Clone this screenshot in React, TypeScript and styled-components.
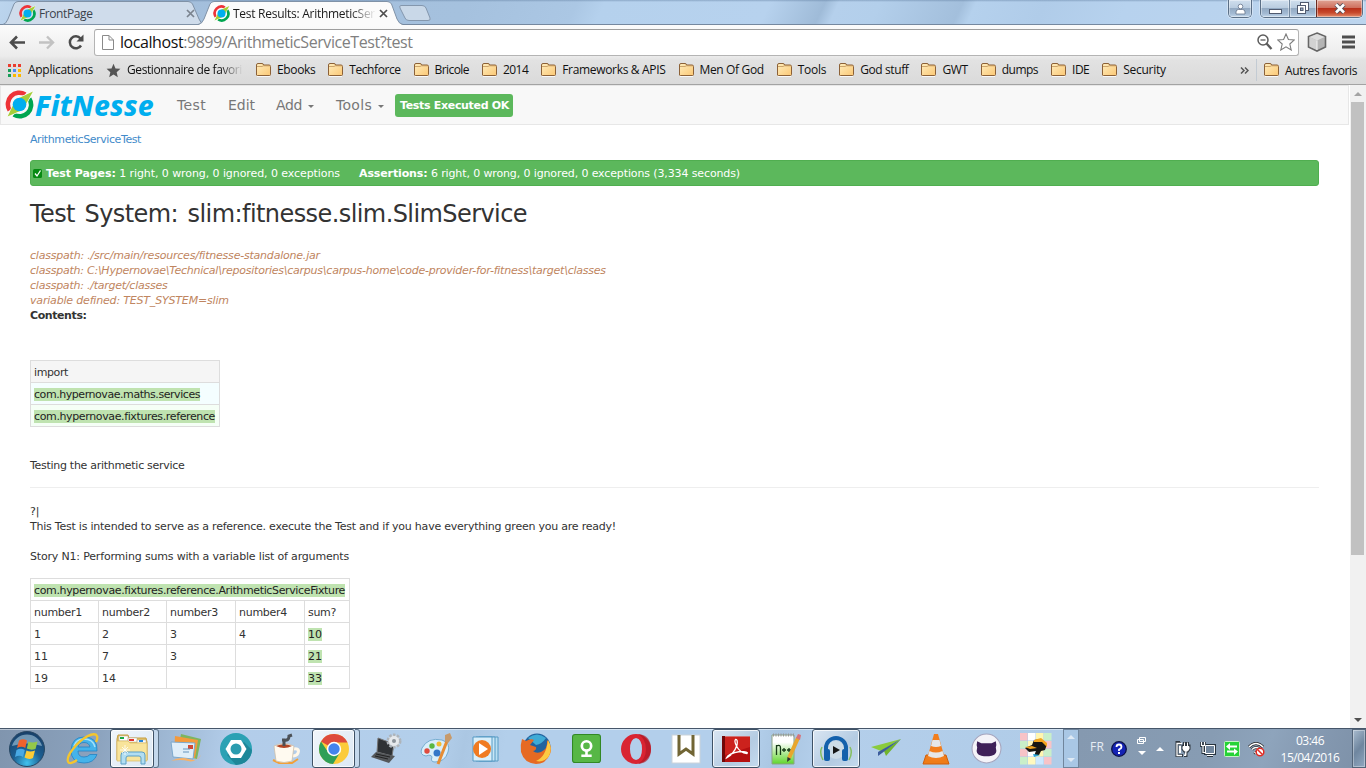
import React, { useLayoutEffect, useRef, useState } from 'react';
import styled, { createGlobalStyle, css } from 'styled-components';

const UI = `"Open Sans", "Noto Sans", sans-serif`;
const PAGE = `"DejaVu Sans", sans-serif`;

const Global = createGlobalStyle`
  * { box-sizing: border-box; }
  body { margin: 0; overflow: hidden; background: #fff; }
  svg { display: block; flex: none; }
`;

/* ---------- text that tracks itself to a given width ---------- */

const FitText = styled.span`
  display: inline-block;
  white-space: nowrap;
  flex: none;
`;

function Fit({ w, children }: { w: number; children: React.ReactNode }) {
  const ref = useRef<HTMLSpanElement>(null);
  const [spacing, setSpacing] = useState(0);
  useLayoutEffect(() => {
    const el = ref.current;
    if (!el) return;
    const count = (el.textContent || '').length;
    setSpacing((w - el.getBoundingClientRect().width) / count);
  }, [w]);
  return (
    <FitText ref={ref} style={{ letterSpacing: `${spacing}px` }}>
      {children}
    </FitText>
  );
}

/* ---------- window frame ---------- */

const Window = styled.div`
  width: 1366px;
  height: 768px;
  display: flex;
  flex-direction: column;
  overflow: hidden;
  font-family: ${UI};
`;

const TabStrip = styled.div`
  height: 25px;
  flex: none;
  display: flex;
  align-items: flex-start;
  padding: 0 3px 0 3px;
  border-bottom: 1px solid #75889f;
  background:
    linear-gradient(rgba(90, 120, 155, 0.45), rgba(90, 120, 155, 0) 2px),
    linear-gradient(115deg, #bcd5ee 0, #a3bedb 8%, #a5c1de 34%, #abc7e4 42%, #b5d1ed 44%, #b7d2ee 56%, #9fbbd8 60%, #b5d0ec 61%, #b3cfeb 64%, #a3bfdc 70%, #b5d1ed 71%, #b0cce9 76%, #b7d2ee 82%, #bdd5ee 100%);
`;

const Tab = styled.div<{ $w: number; $active?: boolean }>`
  position: relative;
  z-index: ${(p) => (p.$active ? 2 : 1)};
  width: ${(p) => p.$w}px;
  height: 25px;
  margin-right: -7px;
  padding: 1px 0 0 ${(p) => (p.$active ? 15 : 16)}px;
  display: flex;
  align-items: center;
  gap: 3px;
  font-size: 12px;
  color: ${(p) => (p.$active ? '#1a1a1a' : '#3b434c')};
  > svg { position: relative; }
`;

const TabShape = styled.span`
  position: absolute;
  inset: 0;
`;

const TabTitle = styled.span<{ $w: number; $fade?: boolean }>`
  position: relative;
  width: ${(p) => p.$w}px;
  overflow: hidden;
  white-space: nowrap;
  ${(p) => p.$fade && css`mask-image: linear-gradient(90deg, #000 82%, transparent 100%);`}
`;

const NewTab = styled.div`
  margin: 5px 0 0 3px;
`;

const WindowControls = styled.div`
  margin-left: auto;
  display: flex;
  gap: 8px;
`;

const ControlGroup = styled.div`
  display: flex;
  height: 18px;
  border: 1px solid #5b6f86;
  border-top: 0;
  border-radius: 0 0 5px 5px;
  overflow: hidden;
  box-shadow: 0 0 0 1px rgba(255, 255, 255, 0.35);
`;

const Control = styled.div<{ $w: number; $close?: boolean }>`
  width: ${(p) => p.$w}px;
  display: flex;
  align-items: center;
  justify-content: center;
  border-left: 1px solid ${(p) => (p.$close ? '#6b2a20' : '#71869d')};
  box-shadow: inset 0 0 0 1px rgba(255, 255, 255, 0.4);
  background: ${(p) =>
    p.$close
      ? 'linear-gradient(#e0a394, #cf705e 45%, #b9301a 50%, #c84a2d 75%, #e48d6c)'
      : 'linear-gradient(#d0dfee, #bacde0 45%, #93aac3 50%, #a3bad3 80%, #c2d6ea)'};
  &:first-child { border-left: 0; }
`;

/* ---------- browser toolbar ---------- */

const Toolbar = styled.div`
  height: 31px;
  flex: none;
  display: flex;
  align-items: center;
  padding: 3px 10px 0 9px;
  background: linear-gradient(#fbfbfb, #ececec);
`;

const NavButton = styled.div<{ $gap: number }>`
  margin-right: ${(p) => p.$gap}px;
`;

const Address = styled.div`
  width: 1205px;
  height: 27px;
  display: flex;
  align-items: center;
  padding: 0 3px 0 7px;
  border: 1px solid #b4b4b4;
  border-top-color: #9e9e9e;
  border-radius: 3px;
  background: #fff;
  font-size: 16px;
  color: #808080;
  b { font-weight: 400; color: #111; }
`;

const AddressText = styled.div`
  flex: 1;
  padding: 0 0 1px 6px;
  line-height: 22px;
`;

const BookmarksBar = styled.div`
  height: 29px;
  flex: none;
  display: flex;
  align-items: center;
  padding-left: 8px;
  font-size: 12px;
  color: #111;
  background: linear-gradient(#ececec, #e2e2e2 15%, #dadada);
  border-bottom: 1px solid #a3a3a3;
`;

const Bookmark = styled.div<{ $gap?: number; $after?: number }>`
  display: flex;
  align-items: center;
  gap: ${(p) => p.$gap ?? 6}px;
  margin-right: ${(p) => p.$after ?? 13}px;
  line-height: 18px;
`;

const FadingLabel = styled.span`
  width: 116px;
  overflow: hidden;
  white-space: nowrap;
  mask-image: linear-gradient(90deg, #000 80%, transparent 100%);
`;

const OtherBookmarks = styled.div`
  margin-left: auto;
  padding: 0 9px 0 7px;
  height: 22px;
  display: flex;
  align-items: center;
  gap: 6px;
  border-left: 1px solid #c3cbd3;
`;

const Overflow = styled.div`
  margin-left: 61px;
`;

/* ---------- page ---------- */

const Viewport = styled.div`
  height: 643px;
  flex: none;
  display: flex;
  background: #fff;
`;

const Page = styled.main`
  width: 1349px;
  font: 11px/15px ${PAGE};
  color: #333;
`;

const Navbar = styled.nav`
  height: 40px;
  display: flex;
  align-items: center;
  padding-left: 4px;
  border: 1px solid #e7e7e7;
  background: #f8f8f8;
  font-size: 14px;
  color: #777;
`;

const Brand = styled.div`
  display: flex;
  align-items: center;
  gap: 1px;
  width: 172px;
  font: italic 800 28px/30px "Noto Sans", "Open Sans", sans-serif;
  color: #00aeef;
  > svg { margin-top: -2px; }
`;

const NavItem = styled.div<{ $after: number }>`
  display: flex;
  align-items: center;
  gap: 6px;
  margin-right: ${(p) => p.$after}px;
`;

const Caret = styled.span`
  margin-top: 3px;
  border: 3px solid transparent;
  border-top-color: #777;
  border-bottom: 0;
`;

const Badge = styled.div`
  height: 23px;
  padding: 0 4px 0 5px;
  line-height: 24px;
  border-radius: 3px;
  background: #5cb85c;
  color: #fff;
  font-size: 11px;
  font-weight: 700;
`;

const Content = styled.div`
  padding: 7px 30px 0;
`;

const Crumb = styled.a`
  display: block;
  color: #428bca;
`;

const Summary = styled.div`
  display: flex;
  align-items: center;
  height: 26px;
  margin-top: 13px;
  padding-left: 2px;
  border-radius: 3px;
  background: #5cb85c;
  border: 1px solid #50ae50;
  color: #fff;
`;

const Counts = styled.span<{ $left: number }>`
  margin-left: ${(p) => p.$left}px;
`;

const Heading = styled.h2`
  margin: 14px 0 0;
  font-size: 24px;
  line-height: 28px;
  font-weight: 400;
  word-spacing: 2.5px;
`;

const Meta = styled.div`
  margin-top: 20px;
  > div { height: 15px; }
`;

const MetaLine = styled.div`
  font-style: italic;
  color: #c08560;
`;

const Line = styled.div`
  height: 15px;
`;

const Spaced = styled.div<{ $top: number }>`
  margin-top: ${(p) => p.$top}px;
`;

const Rule = styled.hr`
  height: 1px;
  margin: 14px 0 16px;
  border: 0;
  background: #eee;
`;

const Grid = styled.table<{ $w: number; $top: number }>`
  width: ${(p) => p.$w}px;
  margin-top: ${(p) => p.$top}px;
  table-layout: fixed;
  border-collapse: collapse;
`;

const Cell = styled.td<{ $bg?: string }>`
  height: 22px;
  padding: 2px 0 0 3px;
  border: 1px solid #ddd;
  background: ${(p) => p.$bg ?? '#fff'};
  line-height: 13px;
  white-space: nowrap;
  vertical-align: middle;
`;

const Pass = styled.span`
  display: inline-block;
  height: 13px;
  background: #bfe3b0;
  color: #222;
`;

const Scrollbar = styled.div`
  width: 17px;
  display: flex;
  flex-direction: column;
  align-items: center;
  background: #f1f1f1;
  border-left: 1px solid #fff;
`;

const Arrow = styled.div<{ $down?: boolean }>`
  height: 17px;
  display: flex;
  align-items: center;
  &::before {
    content: '';
    border: 4px solid transparent;
    ${(p) => (p.$down ? 'border-top-color: #505050; border-bottom: 0;' : 'border-bottom-color: #a3a3a3; border-top: 0;')}
  }
`;

const Thumb = styled.div`
  width: 13px;
  height: 453px;
  margin-bottom: auto;
  margin-right: 1px;
  background: #c1c1c1;
`;

/* ---------- taskbar ---------- */

const Taskbar = styled.div`
  height: 40px;
  flex: none;
  display: flex;
  border-top: 1px solid #46566a;
  box-shadow: inset 0 1px 0 rgba(255, 255, 255, 0.45);
  background: linear-gradient(100deg, #8095ae 0, #8ba2bd 7%, #a5bfdb 14%, #b3cdea 17%, #b3cfeb 32%, #abc7e3 34%, #b3cfeb 37%, #b3cfeb 55%, #a9c5e1 57%, #b4cfeb 60%, #b0cce8 77%);
`;

const StartSlot = styled.div`
  width: 58px;
  padding-left: 8px;
  display: flex;
  align-items: center;
`;

const Slot = styled.div<{ $w?: number }>`
  width: ${(p) => p.$w ?? 50}px;
  display: flex;
  align-items: center;
  justify-content: center;
`;

const RunningButton = styled.div<{ $w: number; $active?: boolean }>`
  width: ${(p) => p.$w}px;
  height: 39px;
  display: flex;
  align-items: center;
  justify-content: center;
  border: 1px solid #3f5266;
  border-radius: 3px;
  box-shadow: inset 0 0 0 1px rgba(255, 255, 255, 0.75);
  background: ${(p) => (p.$active ? 'linear-gradient(135deg, #f0f5fa, #dbe8f4)' : 'linear-gradient(135deg, #dae6f2, #b4cbe2 60%, #c4daee)')};
`;

const StackEdge = styled.div`
  width: 5px;
  height: 39px;
  border: 1px solid #5d7388;
  border-left: 0;
  border-radius: 0 3px 3px 0;
  background: #c4d8ec;
`;

const BandToggle = styled.div`
  width: 16px;
  margin-left: 2px;
  display: flex;
  flex-direction: column;
  justify-content: space-between;
  align-items: center;
  padding: 5px 0;
  border: 1px solid #70859c;
  background: #a9c7e5;
`;

const Triangle = styled.span<{ $up?: boolean; $c?: string }>`
  border: 4px solid transparent;
  ${(p) => (p.$up ? `border-bottom-color: ${p.$c ?? '#dfeaf5'}; border-top: 0;` : `border-top-color: ${p.$c ?? '#dfeaf5'}; border-bottom: 0;`)}
`;

const Tray = styled.div`
  flex: 1;
  display: flex;
  align-items: center;
  padding-left: 11px;
  background: linear-gradient(110deg, #8599b0, #879cb3 45%, #8ea4bc 65%, #8599b1 80%, #7c90a7);
  color: #fff;
  font-size: 12px;
`;

const TrayItem = styled.div<{ $after: number }>`
  display: flex;
  margin-right: ${(p) => p.$after}px;
`;

const Language = styled.div`
  margin: -4px 7px 0 0;
  color: #e6edf4;
`;

const LanguageTools = styled.div`
  width: 9px;
  height: 18px;
  margin: -6px 10px 0 0;
  display: flex;
  flex-direction: column;
  align-items: center;
  justify-content: space-between;
`;

const Clock = styled.div`
  width: 60px;
  display: flex;
  flex-direction: column;
  align-items: center;
  line-height: 17px;
`;

const ShowDesktop = styled.div`
  width: 14px;
  height: 39px;
  margin-left: auto;
  border: 1px solid #536579;
  box-shadow: inset 0 0 0 1px rgba(255, 255, 255, 0.35);
  background: linear-gradient(130deg, #a9bccf, #6f869f 50%, #91a8c0);
`;

/* ---------- drawings ---------- */

const RingLogo = ({ size }: { size: number }) => (
  <svg width={size} height={size} viewBox="0 0 28 28">
    <path d="M4.500 19.500A11 11 0 0 1 19.500 4.200" fill="none" stroke="#ee3338" strokeWidth="4.400" />
    <path d="M23.500 8.500A11 11 0 0 1 8.500 23.800" fill="none" stroke="#00a650" strokeWidth="4.400" />
    <path d="M27.500 1L20.500 15L14 21.500L2 26L7.500 13.500L14 6.500Z" fill="#fff" />
    <path d="M27 1.500L19.500 15L14 20.500L2.500 25.500L8.500 13L14 7.500Z" fill="#a6ce39" />
    <circle cx="14" cy="14" r="6.600" fill="#00aeef" />
  </svg>
);

const CloseX = ({ color }: { color: string }) => (
  <svg width="9" height="9" viewBox="0 0 9 9">
    <path d="M1 1L8 8M8 1L1 8" stroke={color} strokeWidth="1.7" />
  </svg>
);

const Folder = () => (
  <svg width="15" height="14" viewBox="0 0 15 14">
    <defs>
      <linearGradient id="folderFill" x1="0" y1="0" x2="1" y2="1">
        <stop offset="0" stopColor="#ffedbd" />
        <stop offset="1" stopColor="#fbc875" />
      </linearGradient>
    </defs>
    <path d="M.5 12V2Q.5 .5 2 .5H6Q7.500 .5 7.500 2H13Q14.500 2 14.500 3.500V11.500Q14.500 12.500 13.500 12.500H1.500Q.5 12.500 .5 12Z" fill="url(#folderFill)" stroke="#8c6137" />
    <path d="M1 3.500H6L7.500 2.800H14" stroke="#b78a50" strokeWidth=".7" fill="none" />
    <path d="M1 13.500H14" stroke="#fff" strokeWidth=".8" />
  </svg>
);

const AppsGrid = () => (
  <svg width="13" height="13" viewBox="0 0 13 13">
    {['#ea3d2f', '#ea3d2f', '#ea3d2f', '#189d58', '#4b8bf4', '#fcb900', '#189d58', '#fcb900', '#fcb900'].map((c, i) => (
      <rect key={i} x={(i % 3) * 5} y={Math.floor(i / 3) * 5} width="3" height="3" fill={c} />
    ))}
  </svg>
);

const StarPath = 'M9 1L11.400 6.500L17.300 7L12.800 11L14.200 17L9 13.800L3.800 17L5.200 11L.7 7L6.600 6.500Z';

const StartOrb = () => (
  <svg width="38" height="38" viewBox="0 0 38 38">
    <defs>
      <radialGradient id="orb" cx=".5" cy=".9" r=".9">
        <stop offset="0" stopColor="#40c2ee" />
        <stop offset=".45" stopColor="#1c5f92" />
        <stop offset="1" stopColor="#183f68" />
      </radialGradient>
    </defs>
    <circle cx="19" cy="19" r="17.500" fill="url(#orb)" stroke="#274763" />
    <path d="M4 16A15.500 15.500 0 0 1 34 16Q19 11 4 16Z" fill="#a9c9de" opacity=".6" />
    <path d="M11 10.500Q15 8 19 10.500L17.300 18Q13.500 15.500 9 18Z" fill="#f0622c" />
    <path d="M20.500 11.500Q24 13.500 29.500 11.500L27.500 19Q23 20.500 18.800 18.500Z" fill="#94c849" />
    <path d="M8.500 20Q13 17.500 16.800 20L15 27Q11.500 24.500 7 27Z" fill="#49a9e4" />
    <path d="M18.500 20.500Q22 22.500 27 20.500L25 28Q21 30 16.500 27.500Z" fill="#fccb35" />
  </svg>
);

const Explorer = () => (
  <svg width="34" height="34" viewBox="0 0 34 34">
    <path d="M2 7L3 3H13L14 6H31L32 10V28H2Z" fill="#e5c66a" stroke="#c59c40" />
    <path d="M4 4H13V9H4ZM13 6H22V10H13ZM22 8H31V11H22Z" fill="#fff" stroke="#b0a88c" strokeWidth=".5" />
    <path d="M5 5H9V7H5Z" fill="#18a848" /><path d="M14 7H19V9H14Z" fill="#e3352c" /><path d="M24 8H28V10H24Z" fill="#2786d8" />
    <path d="M2 9H13L15 11H32V29H2Z" fill="#f8e49b" stroke="#d9b95e" strokeWidth=".7" />
    <path d="M6 32V23Q6 20 9 20H27Q30 20 30 23V32H26V26Q26 24 24 24H13Q11 24 11 26V32Z" fill="#b2def2" stroke="#5b9fc6" />
    <path d="M10 13V23M5 18H15M7 15L13 21M13 15L7 21" stroke="#fff" strokeWidth=".8" />
  </svg>
);

const IE = () => (
  <svg width="34" height="34" viewBox="0 0 34 34">
    <path fillRule="evenodd" d="M31 19H12Q12 25 18 25Q22 25 24 22.500H31Q28 31 18 31Q5 31 5 18Q6 5 18 5Q32 5 31 19ZM12 15H24Q23 10.500 18 10.500Q13 10.500 12 15Z" fill="#45b3ea" stroke="#2383c4" strokeWidth=".8" />
    <path d="M8 14Q10 7 18 7Q27 7 29 15" fill="none" stroke="#a6e2fa" strokeWidth="1.500" />
    <path d="M11 28C0 36-1 27 7 17C16 5 29-1 31 4Q32 6 30 10" fill="none" stroke="#f4c52d" strokeWidth="2.300" />
  </svg>
);

const Mail = () => (
  <svg width="34" height="34" viewBox="0 0 34 34">
    <path d="M12 2L32 7L28 27L8 22Z" fill="#7eb55f" />
    <path d="M6 4L29 8L26 26L5 23Z" fill="#f39a3d" />
    <path d="M2 10L26 11L24 27L4 25Z" fill="#dfeef9" stroke="#7ca9cd" />
    <path d="M19 13H24V17H19Z" fill="#d04a36" /><path d="M14 17H21M14 20H20" stroke="#6593bd" />
    <path d="M2 29Q11 24 20 27T32 23Q26 31 19 29T2 29Z" fill="#f7b268" />
  </svg>
);

const Nut = () => (
  <svg width="34" height="34" viewBox="0 0 34 34">
    <circle cx="17" cy="17" r="16" fill="#2ba1b4" /><path d="M8 23L17 33A16 16 0 0 0 33 18L25 10Z" fill="#1d8799" />
    <path d="M12 8H22L27.500 17L22 26H12L6.500 17Z" fill="#fff" /><circle cx="17" cy="17" r="5.500" fill="#2b9caf" />
  </svg>
);

const Cup = () => (
  <svg width="32" height="34" viewBox="0 0 32 34">
    <path d="M3 28L9 31H22L28 27" fill="none" stroke="#f1a03a" strokeWidth="2" />
    <path d="M23 17Q30 16 28 21Q27 24 22 24" fill="none" stroke="#fff7e9" strokeWidth="3" />
    <path d="M4 14Q14 9 24 14L22 29Q14 32 6 29Z" fill="#fffaf0" stroke="#cdbfa9" strokeWidth=".8" />
    <path d="M6 14Q14 10.500 22 14Q14 18 6 14Z" fill="#b24626" />
    <path d="M14 14V8H12M14 8Q19 9 19 4L22 3" fill="none" stroke="#4c5157" strokeWidth="3" />
  </svg>
);

const Chrome = () => (
  <svg width="32" height="32" viewBox="0 0 32 32">
    <circle cx="16" cy="16" r="15" fill="#fbcb3a" />
    <path d="M16 16L3 8.500A15 15 0 0 1 29.500 9.500H16Z" fill="#de4b3c" />
    <path d="M3 8.500A15 15 0 0 0 15 31L22 19.500L10 19Z" fill="#2f9f58" />
    <circle cx="16" cy="16" r="7.200" fill="#fff" /><circle cx="16" cy="16" r="5.700" fill="#4484ee" />
  </svg>
);

const Laptop = () => (
  <svg width="32" height="32" viewBox="0 0 32 32">
    <path d="M8 5L24 11L22 23L7 19Z" fill="#2f3235" stroke="#777" /><path d="M6 19L25 23L19 30L1 24Z" fill="#54575a" />
    <path d="M6 21L20 24M5 23L18 26" stroke="#222" />
    <circle cx="24" cy="8" r="6" fill="#d6dade" stroke="#aeb4ba" strokeWidth="3" strokeDasharray="2.400 1.400" /><circle cx="24" cy="8" r="5" fill="#e6e9ec" /><circle cx="24" cy="8" r="2" fill="#8b9299" />
  </svg>
);

const Paint = () => (
  <svg width="34" height="34" viewBox="0 0 34 34">
    <path d="M3 16Q9 5 23 8Q32 11 29 20Q26 30 16 30Q11 30 13 25Q12 22 7 24Q0 23 3 16Z" fill="#d9eefa" stroke="#75acd0" />
    <circle cx="8" cy="19" r="2.700" fill="#e04b3e" /><circle cx="13" cy="14" r="2.700" fill="#5ab741" /><circle cx="20" cy="12" r="2.500" fill="#f1bc33" /><circle cx="18" cy="21" r="3.500" fill="#3477c8" />
    <path d="M19 32L28 9" stroke="#e58d34" strokeWidth="3" /><path d="M26 9L26 3L31 1L33 6L29 11Z" fill="#c79a6b" />
  </svg>
);

const MediaPlayer = () => (
  <svg width="32" height="32" viewBox="0 0 32 32">
    <path d="M9 4H28V28H9Z" fill="#b9dff2" stroke="#579ac4" /><path d="M6 4H25V28H6Z" fill="#c7e6f6" stroke="#579ac4" /><path d="M3 4H22V28H3Z" fill="#d9effa" stroke="#579ac4" />
    <circle cx="12" cy="16" r="9" fill="#f07b21" /><path d="M9 10L18 16L9 22Z" fill="#fff" />
  </svg>
);

const Firefox = () => (
  <svg width="34" height="34" viewBox="0 0 34 34">
    <circle cx="18" cy="15" r="13.500" fill="#22639f" /><path d="M9 6Q18-1 27 6Q23 12 17 13Z" fill="#3fabd6" />
    <path d="M3 7L7 9Q12 6 15 8L11 13L17 15Q18 18 14 19Q17 22 22 20Q29 17 28 8Q34 15 31 22Q27 32 17 32Q5 31 2 20Q1 13 3 7Z" fill="#e66a23" />
    <path d="M29 8Q34 16 30 24Q25 31 17 29Q27 25 29 8Z" fill="#fcca43" />
  </svg>
);

const GreenApp = () => (
  <svg width="29" height="29" viewBox="0 0 28 28">
    <rect x=".5" y=".5" width="27" height="27" rx="2.500" fill="#57b746" stroke="#328825" />
    <circle cx="14" cy="11.500" r="4.500" fill="none" stroke="#fff" strokeWidth="2.600" /><path d="M14 16V21M9 21H19" stroke="#fff" strokeWidth="2.500" />
  </svg>
);

const Opera = () => (
  <svg width="32" height="32" viewBox="0 0 32 32">
    <path fillRule="evenodd" d="M16 1A15 15 0 1 0 16 31A15 15 0 1 0 16 1ZM16 5Q22 6 22 16T16 27Q10 26 10 16T16 5Z" fill="#d92432" />
    <path d="M18 1Q31 2 31 16T18 31Q26 26 26 16T18 1Z" fill="#a91823" opacity=".6" />
  </svg>
);

const Ribbon = () => (
  <svg width="30" height="30" viewBox="0 0 30 30">
    <rect x="1" y="1" width="28" height="28" fill="#fff" stroke="#ccd3da" />
    <path d="M8 1V20L15 15L22 20V1" fill="none" stroke="#716534" strokeWidth="3" />
  </svg>
);

const Acrobat = () => (
  <svg width="30" height="28" viewBox="0 0 30 28">
    <path d="M1 2H29V27H1Z" fill="#b50f10" /><path d="M1 1H4V27H1Z" fill="#710808" /><path d="M4 1H29V12L4 20Z" fill="#dc2e27" opacity=".6" />
    <path d="M5.500 23Q13 19 16 10Q17 4 14.500 4.500Q13 6 15.500 11Q19 18 26 18.500Q28 16.500 19 16.500Q7 18.500 5.500 23Z" fill="none" stroke="#fff" strokeWidth="1.300" />
  </svg>
);

const CodePad = () => (
  <svg width="32" height="34" viewBox="0 0 32 34">
    <defs><linearGradient id="pad" x1="0" y1="0" x2="0" y2="1"><stop offset=".25" stopColor="#fff" /><stop offset="1" stopColor="#5fd52b" /></linearGradient></defs>
    <path d="M2 3H24V32H2Z" fill="url(#pad)" stroke="#8ba386" /><path d="M3 3H24" stroke="#999" strokeWidth="3" strokeDasharray="1 1.500" />
    <path d="M6.500 23V13M6.500 14Q10.500 12 10.500 16V23M12 18H16M14 16V20M17 18H21M19 16V20" fill="none" stroke="#173b18" strokeWidth="1.300" />
    <path d="M19 26L28 6" stroke="#e8a62d" strokeWidth="4" /><path d="M26 6L28 2L31 3L30 8Z" fill="#d7737a" /><path d="M17 30L17.500 25L21 27Z" fill="#333" />
  </svg>
);

const Headphones = () => (
  <svg width="34" height="32" viewBox="0 0 34 32">
    <path d="M3 14Q0 20 4 27M31 14Q34 20 30 27" fill="none" stroke="#86bf60" strokeWidth="1.500" />
    <circle cx="17" cy="17" r="9" fill="#cddce7" /><path d="M14 13L21 17L14 21Z" fill="#171717" />
    <path d="M7 19V15A10 10 0 0 1 27 15V19" fill="none" stroke="#1461ac" strokeWidth="4" />
    <rect x="5" y="16" width="6" height="12" rx="2" fill="#1461ac" /><rect x="23" y="16" width="6" height="12" rx="2" fill="#1461ac" />
  </svg>
);

const Plane = () => (
  <svg width="32" height="24" viewBox="0 0 32 24">
    <path d="M1 10L31 2L11 14Z" fill="#8acb3c" /><path d="M31 2L16 19L14 14Z" fill="#72b52c" /><path d="M31 2L8 19V15Z" fill="#3c5c9c" />
  </svg>
);

const Cone = () => (
  <svg width="28" height="32" viewBox="0 0 28 32">
    <path d="M4 22H24L27 31H1Z" fill="#ef7c18" stroke="#cf5f0c" />
    <path d="M12 1H16L23 26Q14 30 5 26Z" fill="#f27e1d" /><path d="M10.500 7H17.500L19 13Q14 15 9 13Z" fill="#e6e7e8" /><path d="M7.500 18Q14 21 20.500 18L22 23Q14 27 6 23Z" fill="#e6e7e8" />
  </svg>
);

const Cat = () => (
  <svg width="31" height="31" viewBox="0 0 30 30">
    <circle cx="15" cy="15" r="14" fill="#f4f3f8" stroke="#a5a4bd" />
    <path d="M6 8L10 10H20L24 8Q25 12 24 14Q26 21 20 22Q15 23 10 22Q4 21 6 14Q5 12 6 8Z" fill="#3e2058" />
  </svg>
);

const Bird = () => (
  <svg width="32" height="32" viewBox="0 0 32 32">
    {Array.from({ length: 16 }, (_, i) => (
      <rect key={i} x={(i % 4) * 8} y={Math.floor(i / 4) * 8} width="7.500" height="7.500" fill={['#f8c3c7', '#cce8ff', '#fff9bf', '#c9efc9', '#fff6b0', '#fff'][(i * 5 + Math.floor(i / 4)) % 6]} />
    ))}
    <path d="M5 15L12 12L14 7L21 6L27 11L25 17L21 18L19 22L14 23L16 18L9 19Z" fill="#171512" />
    <path d="M14 7L21 5L27 10V14L22 9L14 9ZM5 14L12 13L17 15L10 16Z" fill="#f2a31e" /><path d="M13 21L20 22L14 24Z" fill="#25a4d7" />
  </svg>
);

const HelpBall = () => (
  <svg width="16" height="16" viewBox="0 0 16 16">
    <circle cx="8" cy="8" r="7.300" fill="#1523b4" stroke="#0c1149" strokeWidth="1.300" />
    <path d="M5.500 6Q5.500 3.500 8 3.500T10.500 6Q10.500 7.500 8 8.500V10" fill="none" stroke="#fff" strokeWidth="1.800" /><rect x="7" y="11" width="2" height="2" fill="#fff" />
  </svg>
);

const Plug = () => (
  <svg width="16" height="16" viewBox="0 0 16 16">
    <path d="M6 2.500H3.500V1H2V14.500H8" fill="none" stroke="#303841" strokeWidth="3" />
    <path d="M7 2.500H2V14.500H7" fill="none" stroke="#fff" strokeWidth="1.300" /><path d="M4 5H6V12H4Z" fill="#fff" />
    <path d="M9.500 1V5M12.500 1V5M8 5H14V8L12.500 10H9.500L8 8ZM11 10V15H9" fill="#fff" stroke="#303841" strokeWidth="3" />
    <path d="M9.500 1.500V5M12.500 1.500V5M8 5.500H14V8L12.500 10H9.500L8 8ZM11 10V14.500H9" fill="#fff" stroke="#fff" />
  </svg>
);

const Network = () => (
  <svg width="16" height="16" viewBox="0 0 16 16">
    <path d="M5.500 4.500H14.500V12.500H5.500ZM7 14.500H13" fill="#71869d" stroke="#28343f" strokeWidth="3" />
    <path d="M1.500 1V4.500H4.500V1M3 4V11.500H5" fill="none" stroke="#28343f" strokeWidth="3" />
    <path d="M5.500 4.500H14.500V12.500H5.500ZM7 14.500H13" fill="#71869d" stroke="#fff" />
    <path d="M1.500 1V4.500H4.500V1M3 4V11.500H5" fill="none" stroke="#fff" strokeWidth="1.200" />
  </svg>
);

const SyncIcon = () => (
  <svg width="16" height="16" viewBox="0 0 16 16">
    <rect x=".5" y=".5" width="15" height="15" rx="1" fill="#25d336" stroke="#c4f3c4" /><path d="M2 5.500L6 2V4.500H13V6.500H6V9ZM14 10.500L10 7.500V9.500H3V11.500H10V14Z" fill="#fff" />
  </svg>
);

const WifiOff = () => (
  <svg width="17" height="16" viewBox="0 0 17 16">
    <path d="M1 6Q8-1 15 6M4 8.500Q8 4.500 12 8.500M6.500 11L8 12.500" fill="none" stroke="#222" strokeWidth="3" /><path d="M1 6Q8-1 15 6M4 8.500Q8 4.500 12 8.500M6.500 11L8 12.500" fill="none" stroke="#fff" strokeWidth="1.500" />
    <circle cx="12" cy="11" r="3.800" fill="#fff" stroke="#e22b23" strokeWidth="1.500" /><path d="M9.500 8.500L14.500 13.500" stroke="#e22b23" strokeWidth="1.500" />
  </svg>
);

/* ---------- data ---------- */

const bookmarks: [string, number][] = [
  ['Ebooks', 39], ['Techforce', 52], ['Bricole', 35], ['2014', 26], ['Frameworks & APIS', 104], ['Men Of God', 65],
  ['Tools', 29], ['God stuff', 49], ['GWT', 26], ['dumps', 37], ['IDE', 18], ['Security', 43],
];

const meta: [string, number][] = [
  ['classpath: ./src/main/resources/fitnesse-standalone.jar', 290],
  ['classpath: C:\\Hypernovae\\Technical\\repositories\\carpus\\carpus-home\\code-provider-for-fitness\\target\\classes', 576],
  ['classpath: ./target/classes', 137.5],
  ['variable defined: TEST_SYSTEM=slim', 199],
];

const sums = [['1', '2', '3', '4', '10'], ['11', '7', '3', '', '21'], ['19', '14', '', '', '33']];

const pinned = [Mail, Nut, Cup];
const pinnedAfterChrome = [Laptop, Paint, MediaPlayer, Firefox, GreenApp, Opera, Ribbon];

export default function App() {
  return (
    <Window>
      <Global />
      <TabStrip>
        <Tab $w={202}>
          <TabShape>
            <svg width="202" height="25" viewBox="0 0 202 25">
              <path d="M0 24.500Q3 24 5 19L11 4Q12.500 1.500 15 1.500H185Q188 1.500 189.500 4L196 19Q198 24 201 24.500Z" fill="#cfdceb" stroke="#8092a7" />
            </svg>
          </TabShape>
          <RingLogo size={17} />
          <TabTitle $w={144}><Fit w={53.5}>FrontPage</Fit></TabTitle>
          <CloseX color="#7a838e" />
        </Tab>
        <Tab $w={204} $active>
          <TabShape>
            <svg width="206" height="25" viewBox="0 0 206 25">
              <path d="M0 25Q4 24 6 19L12 4Q13.500 1.500 16 1.500H189Q192 1.500 193.500 4L199 19Q201 24 205 25Z" fill="#fbfbfb" />
              <path d="M0 24.500Q4 24 6 19L12 4Q13.500 1.500 16 1.500H189Q192 1.500 193.500 4L199 19Q201 24 205 24.500" fill="none" stroke="#8092a7" />
            </svg>
          </TabShape>
          <RingLogo size={17} />
          <TabTitle $w={143} $fade><Fit w={142}>Test Results: ArithmeticSer</Fit></TabTitle>
          <CloseX color="#4d4d4d" />
        </Tab>
        <NewTab>
          <svg width="34" height="17" viewBox="0 0 34 17">
            <path d="M3 .5H24Q27 .5 28 3L32 13Q33 15.500 30 15.500H11Q8 15.500 7 13L2 3Q1 .5 3 .5Z" fill="#c9d8e8" stroke="#8497ad" />
          </svg>
        </NewTab>
        <WindowControls>
          <ControlGroup>
            <Control $w={22}>
              <svg width="11" height="12" viewBox="0 0 11 12"><circle cx="5.500" cy="3.500" r="2.300" fill="#fff" stroke="#64748a" strokeWidth=".8" /><path d="M1 11V9Q1 6.500 3.500 6.500H7.500Q10 6.500 10 9V11Z" fill="#fff" stroke="#64748a" strokeWidth=".8" /></svg>
            </Control>
          </ControlGroup>
          <ControlGroup>
            <Control $w={28}>
              <svg width="13" height="12" viewBox="0 0 13 12"><rect x=".5" y="6.500" width="12" height="4" fill="#fff" stroke="#515b70" /></svg>
            </Control>
            <Control $w={27}>
              <svg width="13" height="13" viewBox="0 0 13 13"><rect x="3.500" y=".5" width="8" height="8" fill="#fff" stroke="#515b70" /><rect x=".5" y="3.500" width="8" height="8" fill="#fff" stroke="#515b70" /><rect x="3.500" y="6" width="2.500" height="2.500" fill="#9eb3ca" stroke="#515b70" /></svg>
            </Control>
            <Control $w={46} $close>
              <svg width="12" height="11" viewBox="0 0 12 11"><path d="M2 1.500L10 9.500M10 1.500L2 9.500" stroke="#54505a" strokeWidth="4.500" /><path d="M2 1.500L10 9.500M10 1.500L2 9.500" stroke="#fff" strokeWidth="2.600" /></svg>
            </Control>
          </ControlGroup>
        </WindowControls>
      </TabStrip>

      <Toolbar>
        <NavButton $gap={13}>
          <svg width="17" height="15" viewBox="0 0 17 15"><path d="M16 7.500H3M8 1.500L2 7.500L8 13.500" fill="none" stroke="#4c4c4c" strokeWidth="2.600" /></svg>
        </NavButton>
        <NavButton $gap={13}>
          <svg width="16" height="15" viewBox="0 0 16 15"><path d="M0 7.500H13M8 1.500L14 7.500L8 13.500" fill="none" stroke="#c2c2c2" strokeWidth="2.400" /></svg>
        </NavButton>
        <NavButton $gap={10}>
          <svg width="16" height="16" viewBox="0 0 16 16"><path d="M13 11.500A6 6 0 1 1 12.500 4.500" fill="none" stroke="#4c4c4c" strokeWidth="2.500" /><path d="M15.500 .5V7.500H8.500Z" fill="#4c4c4c" /></svg>
        </NavButton>
        <Address>
          <svg width="12" height="15" viewBox="0 0 12 15"><path d="M.5 .5H7L11.500 5V14.500H.5ZM7 .5V5H11.500" fill="#fff" stroke="#8a8a8a" /></svg>
          <AddressText><Fit w={292.5}><b>localhost</b>:9899/ArithmeticServiceTest?test</Fit></AddressText>
          <svg width="18" height="18" viewBox="0 0 18 18"><circle cx="7" cy="7" r="5" fill="none" stroke="#5c5c5c" strokeWidth="1.500" /><path d="M4.500 7H9.500" stroke="#5c5c5c" strokeWidth="1.300" /><path d="M10.500 10.500L15.500 16" stroke="#5c5c5c" strokeWidth="2.300" /></svg>
          <NavButton $gap={3} />
          <svg width="18" height="18" viewBox="0 0 18 18"><path d={StarPath} fill="#fff" stroke="#7b7b7b" strokeWidth="1.100" /></svg>
        </Address>
        <NavButton $gap={8} />
        <svg width="20" height="20" viewBox="0 0 20 20"><path d="M10 1L18.500 4.500V15L10 19L1.500 15V4.500Z" fill="#b4b4b4" stroke="#666" strokeWidth="1.600" /><path d="M10 2L17.500 5L10 8.500L2.500 5Z" fill="#dedede" /><path d="M2.500 5L10 8.500V18L2.500 14.500Z" fill="#d2d2d2" /><path d="M10 8.500V18" stroke="#f4f4f4" /></svg>
        <NavButton $gap={15} />
        <svg width="13" height="14" viewBox="0 0 13 14"><path d="M0 2H13M0 7H13M0 12H13" stroke="#4e4e4e" strokeWidth="3" /></svg>
      </Toolbar>

      <BookmarksBar>
        <Bookmark $gap={7}><AppsGrid /><Fit w={65}>Applications</Fit></Bookmark>
        <Bookmark $after={13}>
          <svg width="15" height="15" viewBox="0 0 18 18"><path d={StarPath} fill="#555" /></svg>
          <FadingLabel><Fit w={115}>Gestionnaire de favori</Fit></FadingLabel>
        </Bookmark>
        {bookmarks.map(([name, w]) => (
          <Bookmark key={name}><Folder /><Fit w={w - 0.7}>{name}</Fit></Bookmark>
        ))}
        <OtherBookmarksArea />
      </BookmarksBar>

      <Viewport>
        <Page>
          <Navbar>
            <Brand><RingLogo size={29} /><Fit w={119}>FitNesse</Fit></Brand>
            <NavItem $after={22}><Fit w={29}>Test</Fit></NavItem>
            <NavItem $after={21}><Fit w={27}>Edit</Fit></NavItem>
            <NavItem $after={22}><Fit w={26}>Add</Fit><Caret /></NavItem>
            <NavItem $after={11}><Fit w={36}>Tools</Fit><Caret /></NavItem>
            <Badge><Fit w={109}>Tests Executed OK</Fit></Badge>
          </Navbar>
          <Content>
            <Crumb><Fit w={111}>ArithmeticServiceTest</Fit></Crumb>
            <Summary>
              <svg width="9" height="9" viewBox="0 0 9 9"><rect width="9" height="9" rx="1.500" fill="#078a12" /><path d="M2 4.500L4 7L7.500 1.500" fill="none" stroke="#fff" strokeWidth="1.300" /></svg>
              <Counts $left={4}><Fit w={294}><b>Test Pages:</b> 1 right, 0 wrong, 0 ignored, 0 exceptions</Fit></Counts>
              <Counts $left={19}><Fit w={381}><b>Assertions:</b> 6 right, 0 wrong, 0 ignored, 0 exceptions (3,334 seconds)</Fit></Counts>
            </Summary>
            <Heading><Fit w={497}>Test System: slim:fitnesse.slim.SlimService</Fit></Heading>
            <Meta>
              {meta.map(([text, w]) => <MetaLine key={text}><Fit w={w}>{text}</Fit></MetaLine>)}
              <Line><b><Fit w={56.5}>Contents:</Fit></b></Line>
            </Meta>
            <Grid $w={190} $top={37}>
              <tbody>
                <tr><Cell $bg="#f5f5f5"><Fit w={34}>import</Fit></Cell></tr>
                <tr><Cell $bg="#f4feff"><Pass><Fit w={166}>com.hypernovae.maths.services</Fit></Pass></Cell></tr>
                <tr><Cell $bg="#f5fff6"><Pass><Fit w={181}>com.hypernovae.fixtures.reference</Fit></Pass></Cell></tr>
              </tbody>
            </Grid>
            <Spaced $top={31}><Line><Fit w={154.5}>Testing the arithmetic service</Fit></Line></Spaced>
            <Rule />
            <Line>?|</Line>
            <Line><Fit w={586}>This Test is intended to serve as a reference. execute the Test and if you have everything green you are ready!</Fit></Line>
            <Spaced $top={15}><Line><Fit w={319}>Story N1: Performing sums with a variable list of arguments</Fit></Line></Spaced>
            <Grid $w={319} $top={14}>
              <colgroup>
                {[68, 68, 69, 69, 45].map((w, i) => <col key={i} width={w} />)}
              </colgroup>
              <tbody>
                <tr><Cell colSpan={5}><Pass><Fit w={311}>com.hypernovae.fixtures.reference.ArithmeticServiceFixture</Fit></Pass></Cell></tr>
                <tr>
                  {['number1', 'number2', 'number3', 'number4'].map((h) => <Cell key={h}><Fit w={48}>{h}</Fit></Cell>)}
                  <Cell><Fit w={28}>sum?</Fit></Cell>
                </tr>
                {sums.map((row, r) => (
                  <tr key={r}>
                    {row.map((v, i) => <Cell key={i}>{i === 4 ? <Pass>{v}</Pass> : v}</Cell>)}
                  </tr>
                ))}
              </tbody>
            </Grid>
          </Content>
        </Page>
        <Scrollbar>
          <Arrow />
          <Thumb />
          <Arrow $down />
        </Scrollbar>
      </Viewport>

      <Taskbar>
        <StartSlot><StartOrb /></StartSlot>
        <Slot><IE /></Slot>
        <Slot $w={53}><RunningButton $w={44} $active><Explorer /></RunningButton><StackEdge /></Slot>
        {pinned.map((Icon, i) => <Slot key={i}><Icon /></Slot>)}
        <Slot><RunningButton $w={43} $active><Chrome /></RunningButton><StackEdge /></Slot>
        {pinnedAfterChrome.map((Icon, i) => <Slot key={i}><Icon /></Slot>)}
        <Slot><RunningButton $w={48}><Acrobat /></RunningButton></Slot>
        <Slot><CodePad /></Slot>
        <Slot><RunningButton $w={48}><Headphones /></RunningButton></Slot>
        <Slot><Plane /></Slot>
        <Slot><Cone /></Slot>
        <Slot><Cat /></Slot>
        <Slot><Bird /></Slot>
        <BandToggle><Triangle $up /><Triangle /></BandToggle>
        <Tray>
          <Language><Fit w={14}>FR</Fit></Language>
          <TrayItem $after={10}><HelpBall /></TrayItem>
          <LanguageTools>
            <svg width="9" height="7" viewBox="0 0 9 7"><path d="M2.500 .5H8.500V4.500H2.500ZM.5 2.500H6.500V6.500H.5Z" fill="#879cb3" stroke="#fff" /></svg>
            <Triangle $c="#fff" />
          </LanguageTools>
          <TrayItem $after={11}><Triangle $up $c="#fff" /></TrayItem>
          <TrayItem $after={9}><Plug /></TrayItem>
          <TrayItem $after={8}><Network /></TrayItem>
          <TrayItem $after={8}><SyncIcon /></TrayItem>
          <TrayItem $after={15}><WifiOff /></TrayItem>
          <Clock><Fit w={28}>03:46</Fit><Fit w={59}>15/04/2016</Fit></Clock>
          <ShowDesktop />
        </Tray>
      </Taskbar>
    </Window>
  );
}

function OtherBookmarksArea() {
  return (
    <>
      <Overflow>
        <svg width="9" height="7" viewBox="0 0 9 7"><path d="M1 .5L4 3.500L1 6.500M5 .5L8 3.500L5 6.500" fill="none" stroke="#555" strokeWidth="1.500" /></svg>
      </Overflow>
      <OtherBookmarks><Folder /><Fit w={72}>Autres favoris</Fit></OtherBookmarks>
    </>
  );
}
